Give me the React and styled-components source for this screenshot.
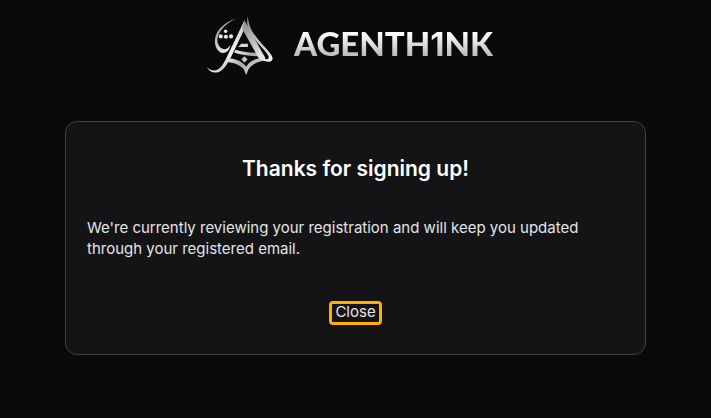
import React from 'react';
import styled, { createGlobalStyle } from 'styled-components';

const GlobalStyle = createGlobalStyle`
  * {
    box-sizing: border-box;
  }

  body {
    margin: 0;
    background: #0a0a0a;
    color: #e4e4e7;
    font-family: Inter, 'Liberation Sans', sans-serif;
  }
`;

const Page = styled.div`
  display: flex;
  flex-direction: column;
  gap: 45px;
  padding: 13px 65px 63px;
`;

const Header = styled.header`
  display: flex;
  justify-content: center;
  align-items: center;
  gap: 20px;
  padding-right: 12px;
`;

const Emblem = styled.svg`
  flex: none;
  width: 68px;
  height: 63px;
`;

const Wordmark = styled.span`
  font-family: Lato, sans-serif;
  font-size: 33px;
  font-weight: 900;
  line-height: 38px;
  padding-bottom: 2px;
  white-space: nowrap;
  background: linear-gradient(#ffffff 20%, #b4b4b8 84%);
  background-clip: text;
  color: transparent;
`;

const Numeral = styled.span`
  font-family: Inter, sans-serif;
  font-weight: 700;
`;

const Card = styled.main`
  display: flex;
  flex-direction: column;
  padding: 32px 21px 29px;
  border: 1px solid #3f3f46;
  border-radius: 12px;
  background: #141416;
`;

const Title = styled.h1`
  margin: 0;
  color: #ffffff;
  font-size: 21px;
  font-weight: 600;
  line-height: 30px;
  text-align: center;
`;

const Message = styled.p`
  margin: 33px 0 42px;
  font-size: 15px;
  line-height: 21px;
`;

const CloseButton = styled.button`
  align-self: center;
  padding: 0 3px 2px;
  border: 3px solid #ffb000;
  border-radius: 4px;
  background: transparent;
  color: inherit;
  font-family: inherit;
  font-size: 15px;
  line-height: 16px;
  cursor: pointer;
`;

const Logo = () => (
  <Emblem viewBox="15 18 198 183" aria-hidden="true">
    <defs>
      <linearGradient id="silver" gradientUnits="userSpaceOnUse" x1="40" y1="30" x2="180" y2="200">
        <stop offset="0" stopColor="#77777b" />
        <stop offset="0.3" stopColor="#c9c9cd" />
        <stop offset="0.5" stopColor="#f4f4f5" />
        <stop offset="0.7" stopColor="#aaaaaf" />
        <stop offset="1" stopColor="#ededf0" />
      </linearGradient>
      <linearGradient id="leg" gradientUnits="userSpaceOnUse" x1="125" y1="40" x2="190" y2="155">
        <stop offset="0" stopColor="#8a8a8e" />
        <stop offset="0.45" stopColor="#b9b9bd" />
        <stop offset="1" stopColor="#f0f0f2" />
      </linearGradient>
    </defs>
    <g fill="url(#silver)">
      <path d="M103 33C74 42 44 65 41 95C39 118 52 134 65 134C77 134 83 124 87 111C79 120 72 126 63 122C52 116 46 104 49 89C54 67 78 45 103 33Z" />
      <path d="M127 39L76 145C65 169 55 185 38 185C29 185 23 181 18 175C24 188 34 192 45 191C61 189 71 176 79 161C98 162 115 170 125 181L132 198L139 181C150 166 167 158 188 157L182 147C157 150 141 159 132 174C122 160 106 152 86 150L130 58Z" />
      <path d="M117 107L137 107L137 117L108 117Q113 113 117 107Z" fill="#d8d8dc" />
      <path d="M101 125C118 131 144 134 163 133L170 144C145 143 116 140 97 133Z" />
      <path d="M127 144L136 153L127 162L118 153Z" fill="#c8c8cc" />
    </g>
    <path d="M127 39L187 147L188 157L169 150L121 65Z" fill="url(#leg)" />
    <path d="M137 27C139 58 151 75 169 97C187 120 210 139 209 151C208 160 198 162 184 157L183 152C193 154 200 152 197 144C190 129 171 113 156 93C139 70 130 49 137 27Z" fill="url(#leg)" />
    <g fill="#e6e6e9">
      <circle cx="58" cy="86" r="6" />
      <circle cx="73" cy="87" r="6" />
      <circle cx="88" cy="86" r="6" />
      <circle cx="72" cy="71" r="5" />
    </g>
  </Emblem>
);

const App = () => (
  <React.Fragment>
    <GlobalStyle />
    <Page>
      <Header>
        <Logo />
        <Wordmark>
          AGENTH<Numeral>1</Numeral>NK
        </Wordmark>
      </Header>
      <Card>
        <Title>Thanks for signing up!</Title>
        <Message>
          We're currently reviewing your registration and will keep you updated
          through your registered email.
        </Message>
        <CloseButton type="button">Close</CloseButton>
      </Card>
    </Page>
  </React.Fragment>
);

export default App;
